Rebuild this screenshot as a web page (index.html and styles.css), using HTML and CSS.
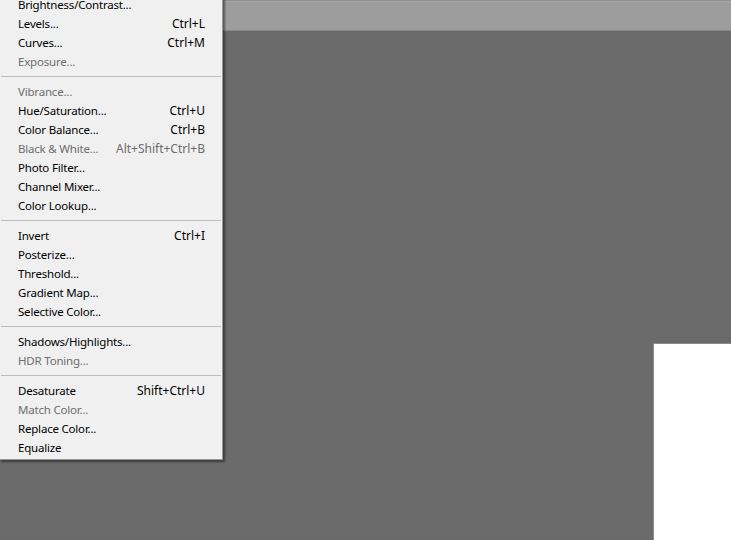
FILE: index.html
```html
<!DOCTYPE html>
<html>
<head>
<meta charset="utf-8">
<link rel="stylesheet" href="styles.css">
</head>
<body>
<div class="app">
  <div class="optionsbar"></div>
  <div class="workspace">
    <div class="canvas"></div>
  </div>
  <div class="menu">
    <div class="item"><span>Brightness/Contrast...</span><span class="key"></span></div>
    <div class="item"><span>Levels...</span><span class="key">Ctrl+L</span></div>
    <div class="item"><span>Curves...</span><span class="key">Ctrl+M</span></div>
    <div class="item disabled"><span>Exposure...</span><span class="key"></span></div>
    <div class="sep"></div>
    <div class="item disabled"><span>Vibrance...</span><span class="key"></span></div>
    <div class="item"><span>Hue/Saturation...</span><span class="key">Ctrl+U</span></div>
    <div class="item"><span>Color Balance...</span><span class="key">Ctrl+B</span></div>
    <div class="item disabled"><span>Black &amp; White...</span><span class="key">Alt+Shift+Ctrl+B</span></div>
    <div class="item"><span>Photo Filter...</span><span class="key"></span></div>
    <div class="item"><span>Channel Mixer...</span><span class="key"></span></div>
    <div class="item"><span>Color Lookup...</span><span class="key"></span></div>
    <div class="sep"></div>
    <div class="item"><span>Invert</span><span class="key">Ctrl+I</span></div>
    <div class="item"><span>Posterize...</span><span class="key"></span></div>
    <div class="item"><span>Threshold...</span><span class="key"></span></div>
    <div class="item"><span>Gradient Map...</span><span class="key"></span></div>
    <div class="item"><span>Selective Color...</span><span class="key"></span></div>
    <div class="sep"></div>
    <div class="item"><span>Shadows/Highlights...</span><span class="key"></span></div>
    <div class="item disabled"><span>HDR Toning...</span><span class="key"></span></div>
    <div class="sep"></div>
    <div class="item"><span>Desaturate</span><span class="key">Shift+Ctrl+U</span></div>
    <div class="item disabled"><span>Match Color...</span><span class="key"></span></div>
    <div class="item"><span>Replace Color...</span><span class="key"></span></div>
    <div class="item"><span>Equalize</span><span class="key"></span></div>
  </div>
</div>
</body>
</html>
```
FILE: styles.css
```css
html, body {
  margin: 0;
  padding: 0;
  width: 731px;
  height: 540px;
  overflow: hidden;
  background: #6b6b6b;
}
.app {
  position: relative;
  width: 731px;
  height: 540px;
  overflow: hidden;
  display: flex;
  flex-direction: column;
}
.optionsbar {
  height: 29px;
  background: #9d9d9d;
  border-top: 1px solid #8e8e8e;
  border-bottom: 1px solid #888888;
  box-shadow: inset 0 1px 0 #a6a6a6;
  flex: none;
}
.workspace {
  flex: 1;
  display: flex;
  padding: 312px 0 0 653px;
  background: #6b6b6b;
}
.canvas {
  flex: none;
  width: 300px;
  height: 400px;
  background: #ffffff;
  border-top: 1px solid #8a8a8a;
  border-left: 1px solid #8a8a8a;
}
.menu {
  position: absolute;
  top: -8px;
  left: -1px;
  width: 222px;
  padding: 2px 0 2px 0;
  background: #f0f0f0;
  border: 1px solid #979797;
  box-shadow: 2px 2px 2px rgba(0, 0, 0, 0.45);
  font-family: "Noto Sans", "Open Sans", sans-serif;
  font-size: 11.5px;
  letter-spacing: -0.2px;
  color: #000000;
}
.item {
  height: 19px;
  display: flex;
  align-items: center;
  justify-content: space-between;
  padding: 0 17px 0 18px;
  white-space: nowrap;
}
.item .key {
  font-size: 12px;
  letter-spacing: 0;
}
.item.disabled {
  color: #6d6d6d;
}
.sep {
  height: 1px;
  margin: 5px 1px 5px 1px;
  background: #bdbdbd;
}
```
